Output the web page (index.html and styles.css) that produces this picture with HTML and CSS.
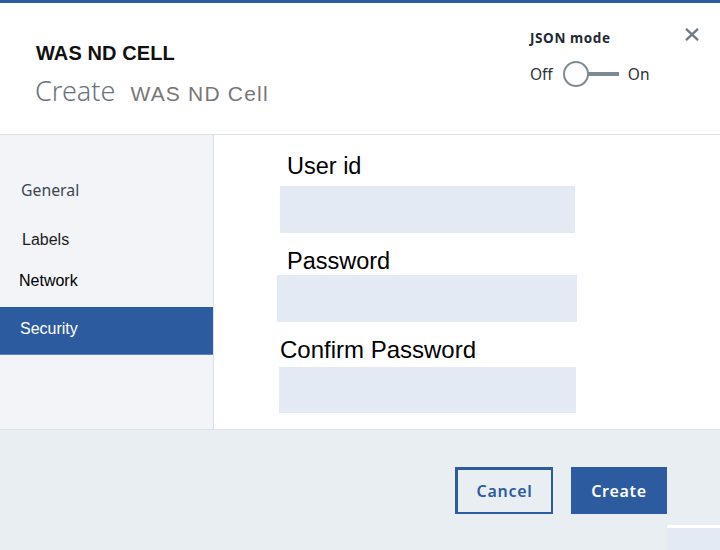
FILE: index.html
```html
<!DOCTYPE html>
<html>
<head>
<meta charset="utf-8">
<link rel="stylesheet" href="styles.css">
</head>
<body>
<div class="topbar"></div>
<header class="header">
  <div class="title">
    <div class="kind">WAS ND CELL</div>
    <div class="subtitle"><span class="verb">Create</span><span class="name">WAS ND Cell</span></div>
  </div>
  <div class="json">
    <div class="json-label">JSON mode</div>
    <div class="toggle-row">
      <span class="tg-text">Off</span>
      <span class="toggle"><span class="knob"></span><span class="track"></span></span>
      <span class="tg-text">On</span>
    </div>
  </div>
  <div class="close">
    <svg width="14" height="13" viewBox="0 0 14 13"><path d="M1 0.8 L13 12.2 M13 0.8 L1 12.2" stroke="#6f7c87" stroke-width="2.3" fill="none"/></svg>
  </div>
</header>
<main class="main">
  <nav class="sidebar">
    <div class="nav-item general">General</div>
    <div class="nav-item labels">Labels</div>
    <div class="nav-item network">Network</div>
    <div class="nav-item security active">Security</div>
  </nav>
  <section class="content">
    <div class="label lbl-user">User id</div>
    <div class="input in-user"></div>
    <div class="label lbl-pass">Password</div>
    <div class="input in-pass"></div>
    <div class="label lbl-confirm">Confirm Password</div>
    <div class="input in-confirm"></div>
  </section>
</main>
<footer class="footer">
  <div class="buttons">
    <button class="btn btn-secondary">Cancel</button>
    <button class="btn btn-primary">Create</button>
  </div>
  <div class="corner"></div>
</footer>
</body>
</html>
```
FILE: styles.css
```css
* { box-sizing: border-box; }
html, body { margin: 0; padding: 0; }
body {
  width: 720px;
  height: 550px;
  overflow: hidden;
  background: #ffffff;
  font-family: "Liberation Sans", Arial, sans-serif;
}
.topbar { height: 3px; background: #2d5ba0; }
.header {
  height: 132px;
  display: flex;
  padding: 0 21px 0 35px;
  border-bottom: 1px solid #dde1e6;
  background: #fff;
}
.title { flex: 1; padding-top: 38px; }
.kind {
  font-size: 20px;
  line-height: 24px;
  font-weight: bold;
  color: #111;
  padding-left: 1px;
  letter-spacing: 0.1px;
}
.subtitle {
  margin-top: 11px;
  display: flex;
  align-items: baseline;
}
.verb {
  font-family: "Noto Sans", sans-serif;
  font-weight: 300;
  font-size: 27px;
  line-height: 30px;
  color: #6b747c;
}
.name {
  margin-left: 15px;
  font-size: 21px;
  letter-spacing: 1.2px;
  color: #777777;
}
.json {
  width: 155px;
  padding-top: 27px;
  font-family: "Noto Sans", sans-serif;
}
.json-label {
  font-size: 13.5px;
  line-height: 16px;
  font-weight: bold;
  letter-spacing: 0.6px;
  color: #1f2933;
}
.toggle-row {
  margin-top: 15px;
  display: flex;
  align-items: center;
  height: 26px;
}
.tg-text { font-size: 15.5px; color: #2a323a; line-height: 20px; }
.toggle {
  display: flex;
  align-items: center;
  margin: 0 9px 0 10px;
}
.knob {
  width: 26px;
  height: 26px;
  border: 2px solid #7d8a94;
  border-radius: 50%;
  background: #fff;
}
.track {
  width: 31px;
  height: 4px;
  background: #7d8a94;
  margin-left: -1px;
}
.close { padding-top: 25px; width: 14px; }
.close svg { display: block; }

.main {
  display: flex;
  height: 295px;
  border-bottom: 1px solid #dde1e6;
}
.sidebar {
  width: 214px;
  background: #f2f4f8;
  border-right: 1px solid #dde1e6;
}
.nav-item {
  font-size: 16px;
  line-height: 20px;
  color: #111;
}
.general {
  margin-top: 45px;
  padding-left: 21px;
  font-family: "Noto Sans", sans-serif;
  font-size: 15.8px;
  color: #3d4752;
}
.labels { margin-top: 30px; padding-left: 22px; color: #1c1c1c; }
.network { margin-top: 21px; padding-left: 19px; color: #000; }
.security {
  margin-top: 16px;
  padding: 12px 0 15px 20px;
  border-bottom: 1px solid #5f82bb;
}
.active { background: #2d5ba0; color: #fff; }

.content {
  flex: 1;
  padding-top: 18px;
  padding-left: 66px;
}
.label {
  font-size: 23.5px;
  line-height: 27px;
  color: #000;
}
.input { background: #e4eaf4; height: 47px; }
.lbl-user { margin-left: 7px; }
.in-user { margin-top: 6px; width: 295px; }
.lbl-pass { margin-left: 7px; margin-top: 15px; }
.in-pass { margin-left: -3px; width: 300px; }
.lbl-confirm { margin-top: 14px; font-size: 24px; }
.in-confirm { margin-top: 4px; margin-left: -1px; width: 297px; height: 46px; }

.footer {
  position: relative;
  height: 120px;
  background: #e9eef3;
  padding-top: 37px;
}
.buttons {
  display: flex;
  justify-content: flex-end;
  gap: 18px;
  padding-right: 53px;
}
.btn {
  height: 47px;
  font-family: "Noto Sans", sans-serif;
  font-size: 16px;
  font-weight: 600;
  letter-spacing: 0.7px;
  border: 2px solid #2d5ba0;
  padding: 0;
  cursor: pointer;
}
.btn-secondary { width: 98px; background: transparent; color: #2d5ba0; border-width: 3px 2px 2px 3px; }
.btn-primary { width: 96px; background: #2d5ba0; color: #fff; }
.corner {
  position: absolute;
  right: 0;
  bottom: 0;
  width: 53px;
  height: 25px;
  border-top: 3px solid #ffffff;
  background: #e4eaf4;
}
```
